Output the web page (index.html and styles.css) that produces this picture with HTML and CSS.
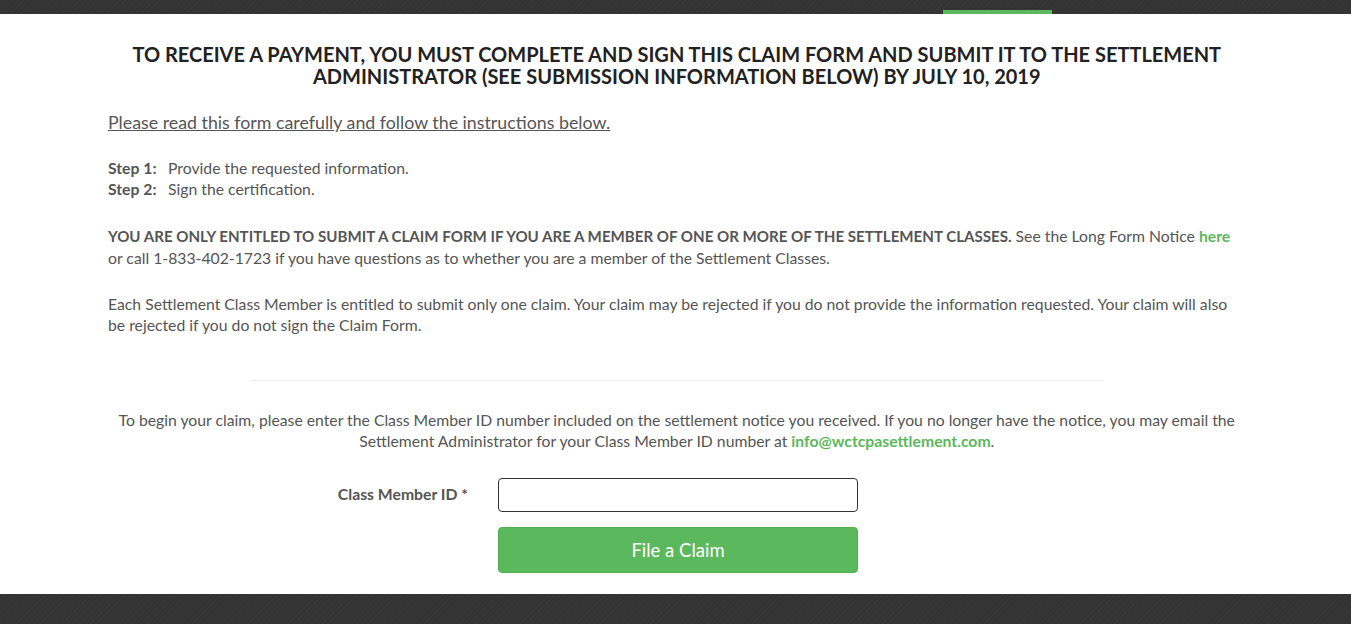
FILE: index.html
```html
<!DOCTYPE html>
<html lang="en">
<head>
  <meta charset="UTF-8" />
  <title>Claim Form</title>
  <link rel="stylesheet" href="styles.css">
</head>
<body>

  <div class="topbar">
    <span class="topbar-active"></span>
  </div>

  <main class="content">
    <h1>To receive a payment, you must complete and sign this claim form and submit it to the settlement administrator (see submission information below) by July 10, 2019</h1>

    <p class="intro">Please read this form carefully and follow the instructions below.</p>

    <div class="steps">
      <div><strong>Step 1:</strong> Provide the requested information.</div>
      <div><strong>Step 2:</strong> Sign the certification.</div>
    </div>

    <p class="notice"><strong class="caps">YOU ARE ONLY ENTITLED TO SUBMIT A CLAIM FORM IF YOU ARE A MEMBER OF ONE OR MORE OF THE SETTLEMENT CLASSES.</strong> See the Long Form Notice <a href="#">here</a> or call 1-833-402-1723 if you have questions as to whether you are a member of the Settlement Classes.</p>

    <p>Each Settlement Class Member is entitled to submit only one claim. Your claim may be rejected if you do not provide the information requested. Your claim will also be rejected if you do not sign the Claim Form.</p>

    <hr>

    <p class="begin">To begin your claim, please enter the Class Member ID number included on the settlement notice you received. If you no longer have the notice, you may email the Settlement Administrator for your Class Member ID number at <a href="#">info@wctcpasettlement.com</a>.</p>

    <form class="claim-form">
      <div class="form-row">
        <label for="memberId">Class Member ID *</label>
        <input type="text" id="memberId">
      </div>
      <div class="form-row">
        <span></span>
        <button type="button">File a Claim</button>
      </div>
    </form>
  </main>

  <footer></footer>

</body>
</html>
```

FILE: styles.css
```css
* {
  margin: 0;
  padding: 0;
  box-sizing: border-box;
}

body {
  font-family: Lato, 'Open Sans', sans-serif;
  color: #555;
  font-size: 15.75px;
  line-height: 21px;
  background: #fff;
}

.topbar {
  height: 14px;
  background: repeating-linear-gradient(135deg, #363636 0, #363636 2px, #333 2px, #333 4px);
  position: relative;
}

.topbar-active {
  position: absolute;
  left: 943px;
  bottom: 0;
  width: 109px;
  height: 4px;
  background: #5cb85c;
}

.content {
  width: 1140px;
  margin: 0 auto;
  padding: 29px 0 21px 2.5px;
}

h1 {
  text-align: center;
  text-transform: uppercase;
  font-size: 20px;
  line-height: 22px;
  font-weight: 700;
  color: #222;
  padding: 0 10px;
  margin-bottom: 25px;
}

.intro {
  font-size: 17.8px;
  text-decoration: underline;
  margin-bottom: 24px;
}

.steps {
  margin-bottom: 26px;
}

.steps strong {
  display: inline-block;
  width: 56px;
}

p {
  margin-bottom: 25px;
}

.notice {
  padding-right: 6px;
}

strong {
  font-weight: 700;
}

strong.caps {
  font-size: 15.1px;
}

a {
  color: #5cb85c;
  font-weight: 700;
  text-decoration: none;
}

hr {
  width: 854px;
  margin: 45px auto 28px;
  border: 0;
  border-top: 1px solid #eee;
}

.begin {
  text-align: center;
  margin-bottom: 27px;
}

.claim-form {
  display: flex;
  flex-direction: column;
  gap: 15px;
}

.form-row {
  display: grid;
  grid-template-columns: 360px 360px;
  column-gap: 30px;
  align-items: center;
}

.form-row label {
  text-align: right;
  font-weight: 700;
  padding-bottom: 3px;
}

.form-row input {
  height: 34px;
  border: 1px solid #333;
  border-radius: 4px;
  padding: 6px 12px;
  font-size: 15px;
}

.form-row button {
  height: 46px;
  background: #5cb85c;
  color: #fff;
  border: 1px solid #4cae4c;
  border-radius: 4px;
  font-family: inherit;
  font-size: 18.5px;
  font-weight: 400;
}

footer {
  height: 40px;
  background: repeating-linear-gradient(135deg, #363636 0, #363636 2px, #333 2px, #333 4px);
}
```
